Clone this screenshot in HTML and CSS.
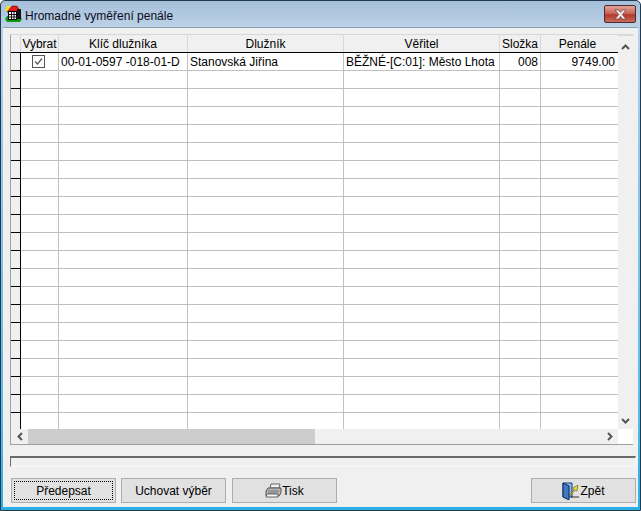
FILE: index.html
```html
<!DOCTYPE html>
<html lang="cs">
<head>
<meta charset="utf-8">
<title>Hromadné vyměření penále</title>
<link rel="stylesheet" href="styles.css">
</head>
<body>
<div class="window">
  <div class="titlebar">
    <svg class="appicon" width="17" height="17" viewBox="0 0 17 17">
      <path d="M0 14l2-3h13l2 3-2 3H2z" fill="#0a9a0a"/>
      <path d="M0 6l2-5h4L3 6z" fill="#f4e020"/>
      <path d="M2 7l5-6h5l3 5-3 1z" fill="#e81818" stroke="#300" stroke-width=".5"/>
      <rect x="12" y="4" width="4" height="10" fill="#111"/>
      <rect x="3.500" y="6.500" width="8" height="8" fill="#fff" stroke="#000"/>
      <path d="M6.500 7v7M9 7v7M4 9.500h7M4 12h7" stroke="#000" stroke-width=".9"/>
    </svg>
    <span class="title">Hromadné vyměření penále</span>
    <div class="close">
      <svg width="15" height="11" viewBox="0 0 15 11"><path d="M2 1l3.800 4.500L2 10h3.500l2-2.500 2 2.500H13L9.200 5.500 13 1H9.500l-2 2.500-2-2.500z" fill="#f2f2f2" stroke="#6b3a36" stroke-width=".7"/></svg>
    </div>
  </div>
  <div class="client">
    <div class="gridbox">
      <div class="gridmain">
        <div class="grid">
          <div class="row head">
            <div class="c c0"></div><div class="c c1">Vybrat</div><div class="c c2">Klíč dlužníka</div><div class="c c3">Dlužník</div><div class="c c4">Věřitel</div><div class="c c5">Složka</div><div class="c c6">Penále</div>
          </div>
          <div class="row">
            <div class="c c0"></div>
            <div class="c c1"><svg class="check" width="13" height="13" viewBox="0 0 13 13"><rect x=".5" y=".5" width="12" height="12" fill="#fff" stroke="#555"/><path d="M3 6.500l2.500 2.500L10 3.500" fill="none" stroke="#555" stroke-width="1.200"/></svg></div>
            <div class="c c2 left">00-01-0597 -018-01-D</div><div class="c c3 left">Stanovská Jiřina</div><div class="c c4 left">BĚŽNÉ-[C:01]: Město Lhota</div><div class="c c5 right">008</div><div class="c c6 right">9749.00</div>
          </div>
          <div class="row"><div class="c c0"></div><div class="c c1"></div><div class="c c2"></div><div class="c c3"></div><div class="c c4"></div><div class="c c5"></div><div class="c c6"></div></div>
          <div class="row"><div class="c c0"></div><div class="c c1"></div><div class="c c2"></div><div class="c c3"></div><div class="c c4"></div><div class="c c5"></div><div class="c c6"></div></div>
          <div class="row"><div class="c c0"></div><div class="c c1"></div><div class="c c2"></div><div class="c c3"></div><div class="c c4"></div><div class="c c5"></div><div class="c c6"></div></div>
          <div class="row"><div class="c c0"></div><div class="c c1"></div><div class="c c2"></div><div class="c c3"></div><div class="c c4"></div><div class="c c5"></div><div class="c c6"></div></div>
          <div class="row"><div class="c c0"></div><div class="c c1"></div><div class="c c2"></div><div class="c c3"></div><div class="c c4"></div><div class="c c5"></div><div class="c c6"></div></div>
          <div class="row"><div class="c c0"></div><div class="c c1"></div><div class="c c2"></div><div class="c c3"></div><div class="c c4"></div><div class="c c5"></div><div class="c c6"></div></div>
          <div class="row"><div class="c c0"></div><div class="c c1"></div><div class="c c2"></div><div class="c c3"></div><div class="c c4"></div><div class="c c5"></div><div class="c c6"></div></div>
          <div class="row"><div class="c c0"></div><div class="c c1"></div><div class="c c2"></div><div class="c c3"></div><div class="c c4"></div><div class="c c5"></div><div class="c c6"></div></div>
          <div class="row"><div class="c c0"></div><div class="c c1"></div><div class="c c2"></div><div class="c c3"></div><div class="c c4"></div><div class="c c5"></div><div class="c c6"></div></div>
          <div class="row"><div class="c c0"></div><div class="c c1"></div><div class="c c2"></div><div class="c c3"></div><div class="c c4"></div><div class="c c5"></div><div class="c c6"></div></div>
          <div class="row"><div class="c c0"></div><div class="c c1"></div><div class="c c2"></div><div class="c c3"></div><div class="c c4"></div><div class="c c5"></div><div class="c c6"></div></div>
          <div class="row"><div class="c c0"></div><div class="c c1"></div><div class="c c2"></div><div class="c c3"></div><div class="c c4"></div><div class="c c5"></div><div class="c c6"></div></div>
          <div class="row"><div class="c c0"></div><div class="c c1"></div><div class="c c2"></div><div class="c c3"></div><div class="c c4"></div><div class="c c5"></div><div class="c c6"></div></div>
          <div class="row"><div class="c c0"></div><div class="c c1"></div><div class="c c2"></div><div class="c c3"></div><div class="c c4"></div><div class="c c5"></div><div class="c c6"></div></div>
          <div class="row"><div class="c c0"></div><div class="c c1"></div><div class="c c2"></div><div class="c c3"></div><div class="c c4"></div><div class="c c5"></div><div class="c c6"></div></div>
          <div class="row"><div class="c c0"></div><div class="c c1"></div><div class="c c2"></div><div class="c c3"></div><div class="c c4"></div><div class="c c5"></div><div class="c c6"></div></div>
          <div class="row"><div class="c c0"></div><div class="c c1"></div><div class="c c2"></div><div class="c c3"></div><div class="c c4"></div><div class="c c5"></div><div class="c c6"></div></div>
          <div class="row"><div class="c c0"></div><div class="c c1"></div><div class="c c2"></div><div class="c c3"></div><div class="c c4"></div><div class="c c5"></div><div class="c c6"></div></div>
          <div class="row"><div class="c c0"></div><div class="c c1"></div><div class="c c2"></div><div class="c c3"></div><div class="c c4"></div><div class="c c5"></div><div class="c c6"></div></div>
          <div class="row"><div class="c c0"></div><div class="c c1"></div><div class="c c2"></div><div class="c c3"></div><div class="c c4"></div><div class="c c5"></div><div class="c c6"></div></div>
        </div>
        <div class="vscroll">
          <svg width="9" height="6" viewBox="0 0 9 6"><path d="M1 5l3.500-3.500L8 5" fill="none" stroke="#555" stroke-width="2"/></svg>
          <svg width="9" height="6" viewBox="0 0 9 6"><path d="M1 1l3.500 3.500L8 1" fill="none" stroke="#555" stroke-width="2"/></svg>
        </div>
      </div>
      <div class="hscrollrow">
        <div class="hscroll">
          <svg class="arrow" width="6" height="9" viewBox="0 0 6 9"><path d="M5 1L1.500 4.500 5 8" fill="none" stroke="#555" stroke-width="2"/></svg>
          <div class="thumb"></div>
          <svg class="arrow" width="6" height="9" viewBox="0 0 6 9"><path d="M1 1l3.500 3.500L1 8" fill="none" stroke="#555" stroke-width="2"/></svg>
        </div>
        <div class="corner"></div>
      </div>
    </div>
    <div class="progress"></div>
    <div class="buttons">
      <button class="btn focused"><span class="focusring">Předepsat</span></button>
      <button class="btn">Uchovat výběr</button>
      <button class="btn tisk">
        <svg width="17" height="15" viewBox="0 0 17 15"><path d="M6 1h9l-1 4H5z" fill="#f2f2f2" stroke="#666"/><path d="M3 5h13v5l-2 3H1V8z" fill="#b5b5b5" stroke="#555"/><path d="M3 8h11M3 10h10" stroke="#777"/><path d="M2 11h11v3H1z" fill="#f4f4f4" stroke="#666"/></svg>Tisk
      </button>
      <div class="spacer"></div>
      <button class="btn zpet">
        <svg width="18" height="18" viewBox="0 0 18 18"><path d="M1 1h9v14H1z" fill="#8fb6e0" stroke="#123a7a"/><path d="M1 1l6 3v14l-6-3z" fill="#3f78c0" stroke="#0a2a5a"/><path d="M7 13l5-5-1-2 5-3-1 6-2-1-4 5z" fill="#f5e214" stroke="#333" stroke-width=".5"/><path d="M9 15h8" stroke="#333"/></svg>Zpět
      </button>
    </div>
  </div>
</div>
</body>
</html>
```
FILE: styles.css
```css
* { box-sizing: border-box; }
html, body { margin: 0; padding: 0; }
body {
  width: 641px;
  height: 511px;
  overflow: hidden;
  font-family: "Liberation Sans", Arial, sans-serif;
  font-size: 12px;
  color: #000;
}
.window {
  width: 641px;
  height: 511px;
  display: flex;
  flex-direction: column;
  background: linear-gradient(180deg, #a6bfd9 0, #bcd2e7 27px, #9cc9ea 120px, #55bbea 420px, #2aaee6 100%);
  border: 1px solid #1f3a52;
  border-radius: 5px 5px 0 0;
  padding: 0 2px 3px 2px;
}
.titlebar {
  height: 26px;
  flex: none;
  display: flex;
  align-items: flex-start;
}
.appicon { margin: 4px 0 0 2px; flex: none; }
.title {
  margin: 8px 0 0 3px;
  font-size: 12px;
  line-height: 14px;
  color: #0b0b20;
}
.close {
  margin: 4px 2px 0 auto;
  width: 32px;
  height: 18px;
  display: flex;
  align-items: center;
  justify-content: center;
  background: linear-gradient(180deg, #dfa498 0%, #c9685a 45%, #b23a2a 55%, #c96b5c 100%);
  border: 1px solid #4d2a30;
  border-radius: 2px;
}
.client {
  flex: 1;
  min-height: 0;
  background: #f0f0f0;
  border-top: 1px solid #8aa0b5;
  display: flex;
  flex-direction: column;
  padding: 6px 0 0 7px;
}
.gridbox {
  width: 623px;
  height: 411px;
  flex: none;
  border: 1px solid #a0a0a0;
  border-top-color: #d8d8d8;
  border-right: 0;
  display: flex;
  flex-direction: column;
  background: #f0f0f0;
}
.gridmain {
  flex: 1;
  min-height: 0;
  display: flex;
}
.grid {
  width: 607px;
  overflow: hidden;
  background: #fff;
  height: 394px;
  flex: none;
}
.row {
  display: flex;
  height: 18px;
  border-bottom: 1px solid #c0c0c0;
}
.row.head {
  height: 18px;
  background: #f0f0f0;
  border-bottom: 1px solid #000;
}
.c {
  height: 100%;
  flex: none;
  border-right: 1px solid #c0c0c0;
  display: flex;
  align-items: center;
  justify-content: center;
  white-space: nowrap;
  overflow: hidden;
  padding: 0 2px;
}
.c0 { width: 10px; background: #f0f0f0; border-right-color: #000; }
.row:not(.head) .c0 { box-shadow: 0 1px 0 #000; }
.c1 { width: 38px; }
.c2 { width: 129px; }
.c3 { width: 156px; }
.c4 { width: 156px; }
.c5 { width: 41px; }
.c6 { width: 77px; border-right: 0; }
.head .c { border-right-color: #d8d8d8; padding-top: 1px; }
.head .c0 { border-right-color: #d8d8d8; }
.head .c6 { padding-right: 6px; }
.check { margin-left: -2px; }
.left { justify-content: flex-start; }
.right { justify-content: flex-end; }
.c6.right { padding-right: 3px; }
.vscroll {
  flex: 1;
  background: #f0f0f0;
  display: flex;
  flex-direction: column;
  justify-content: space-between;
  align-items: center;
  padding: 8px 0 5px;
  border-top: 1px solid #d8d8d8;
}
.hscrollrow {
  height: 15px;
  flex: none;
  display: flex;
}
.hscroll {
  width: 607px;
  flex: none;
  display: flex;
  align-items: center;
  background: #f0f0f0;
}
.hscroll .arrow { flex: none; margin-left: 6px; margin-right: 5px; }
.hscroll .arrow:last-child { margin-left: auto; margin-right: 5px; }
.thumb {
  width: 287px;
  height: 15px;
  background: #cdcdcd;
}
.corner { flex: 1; background: #fff; }
.progress {
  width: 626px;
  height: 11px;
  flex: none;
  margin-top: 11px;
  border: 1px solid #f8f8f8;
  border-top: 2px solid #6a6a6a;
  border-left: 1px solid #6a6a6a;
  background: #f0f0f0;
}
.buttons {
  display: flex;
  margin-top: 11px;
  padding-left: 1px;
}
.btn {
  width: 105px;
  height: 25px;
  flex: none;
  margin-right: 5px;
  padding: 0;
  background: #e1e1e1;
  border: 1px solid #adadad;
  font-family: "Liberation Sans", Arial, sans-serif;
  font-size: 12px;
  color: #000;
  display: flex;
  align-items: center;
  justify-content: center;
}
.tisk { margin-left: 1px; }
.focused { padding: 2px; }
.focusring {
  flex: 1;
  height: 100%;
  display: flex;
  align-items: center;
  justify-content: center;
  border: 1px dotted #000;
}
.spacer { width: 189px; flex: none; }
```
